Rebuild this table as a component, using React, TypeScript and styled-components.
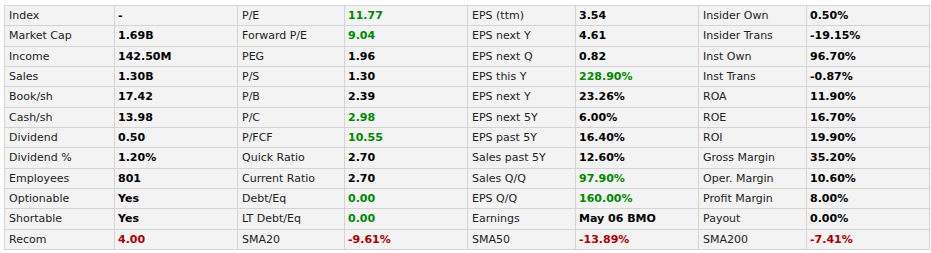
import React from "react";
import styled, { createGlobalStyle } from "styled-components";

const Global = createGlobalStyle`
  html, body { margin: 0; padding: 0; background: #ffffff; }
`;

const Wrapper = styled.div`
  padding: 5px 0 0 4px;
`;

const Grid = styled.div`
  display: grid;
  grid-template-columns: 110px 123px 107px 123px 108px 123px 108px 123px;
  width: max-content;
  border-top: 1px solid #d4d4d4;
  border-left: 1px solid #d4d4d4;
  background: #f3f3f3;
  font-family: "DejaVu Sans", Verdana, sans-serif;
  font-size: 11px;
`;

type Tone = "plain" | "pos" | "neg";

const Cell = styled.div`
  box-sizing: border-box;
  padding: 3px 3px 3px 4px;
  line-height: 13.33px;
  height: 20.33px;
  border-right: 1px solid #d4d4d4;
  border-bottom: 1px solid #d4d4d4;
  white-space: nowrap;
  overflow: hidden;
`;

const Label = styled(Cell)`
  color: #222;
`;

const Value = styled(Cell)<{ $tone: Tone }>`
  font-weight: bold;
  padding-left: 3px;
  color: ${(p) => (p.$tone === "pos" ? "#008800" : p.$tone === "neg" ? "#aa0000" : "#000")};
`;

type Item = [string, string, Tone?];

const rows: Item[][] = [
  [["Index", "-"], ["P/E", "11.77", "pos"], ["EPS (ttm)", "3.54"], ["Insider Own", "0.50%"]],
  [["Market Cap", "1.69B"], ["Forward P/E", "9.04", "pos"], ["EPS next Y", "4.61"], ["Insider Trans", "-19.15%"]],
  [["Income", "142.50M"], ["PEG", "1.96"], ["EPS next Q", "0.82"], ["Inst Own", "96.70%"]],
  [["Sales", "1.30B"], ["P/S", "1.30"], ["EPS this Y", "228.90%", "pos"], ["Inst Trans", "-0.87%"]],
  [["Book/sh", "17.42"], ["P/B", "2.39"], ["EPS next Y", "23.26%"], ["ROA", "11.90%"]],
  [["Cash/sh", "13.98"], ["P/C", "2.98", "pos"], ["EPS next 5Y", "6.00%"], ["ROE", "16.70%"]],
  [["Dividend", "0.50"], ["P/FCF", "10.55", "pos"], ["EPS past 5Y", "16.40%"], ["ROI", "19.90%"]],
  [["Dividend %", "1.20%"], ["Quick Ratio", "2.70"], ["Sales past 5Y", "12.60%"], ["Gross Margin", "35.20%"]],
  [["Employees", "801"], ["Current Ratio", "2.70"], ["Sales Q/Q", "97.90%", "pos"], ["Oper. Margin", "10.60%"]],
  [["Optionable", "Yes"], ["Debt/Eq", "0.00", "pos"], ["EPS Q/Q", "160.00%", "pos"], ["Profit Margin", "8.00%"]],
  [["Shortable", "Yes"], ["LT Debt/Eq", "0.00", "pos"], ["Earnings", "May 06 BMO"], ["Payout", "0.00%"]],
  [["Recom", "4.00", "neg"], ["SMA20", "-9.61%", "neg"], ["SMA50", "-13.89%", "neg"], ["SMA200", "-7.41%", "neg"]],
];

export default function App() {
  return (
    <>
      <Global />
      <Wrapper>
        <Grid>
          {rows.map((row, r) =>
            row.map(([label, value, tone], c) => (
              <React.Fragment key={`${r}-${c}`}>
                <Label>{label}</Label>
                <Value $tone={tone ?? "plain"}>{value}</Value>
              </React.Fragment>
            ))
          )}
        </Grid>
      </Wrapper>
    </>
  );
}
